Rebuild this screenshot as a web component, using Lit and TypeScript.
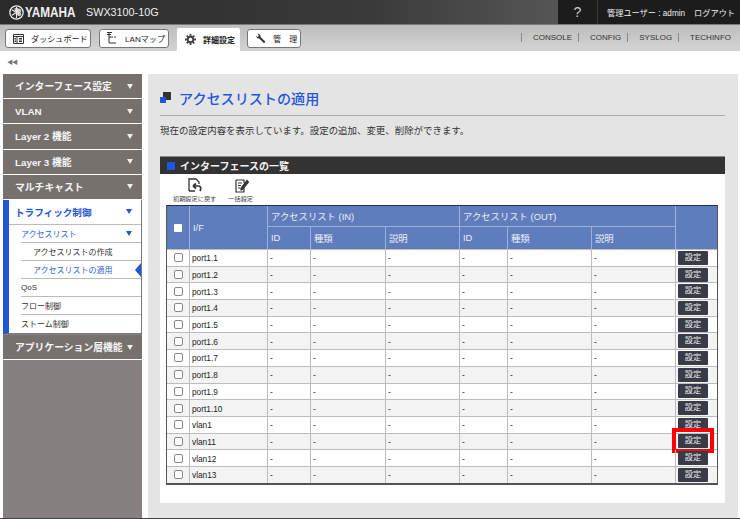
import { css, html, LitElement, svg } from "lit";
import { customElement } from "lit/decorators.js";

const ports = [
    "port1.1", "port1.2", "port1.3", "port1.4", "port1.5", "port1.6", "port1.7",
    "port1.8", "port1.9", "port1.10", "vlan1", "vlan11", "vlan12", "vlan13",
];

const emblem = svg`
    <circle cx="9" cy="9" r="8" fill="none" stroke="#eee" stroke-width="1.5"></circle>
    <g stroke="#eee" stroke-width="1.3" fill="none">
        <path d="M9 2.5V15.5M7.4 3.5V6.5Q9 8 10.6 6.5V3.5"></path>
        <path d="M9 2.5V15.5M7.4 3.5V6.5Q9 8 10.6 6.5V3.5" transform="rotate(60 9 9)"></path>
        <path d="M9 2.5V15.5M7.4 3.5V6.5Q9 8 10.6 6.5V3.5" transform="rotate(120 9 9)"></path>
    </g>`;

@customElement("app-root")
export class AppRoot extends LitElement {
    static styles = css`
        :host {
            display: block;
            width: 740px;
            height: 519px;
            overflow: hidden;
            background: #fff;
            color: #222;
            font-family: "Liberation Sans", "Noto Sans CJK JP", sans-serif;
            font-size: 9px;
        }
        .page {
            display: flex;
            flex-direction: column;
            height: 519px;
            box-sizing: border-box;
            border-bottom: 1px solid #444;
        }

        /* header */
        .top {
            display: flex;
            align-items: center;
            height: 24px;
            background: linear-gradient(90deg, #2a2a2a 0%, #3a3a3a 50%, #555 75%);
            color: #eee;
            flex: none;
        }
        .logo { display: flex; align-items: center; margin-left: 9px; width: 77px; }
        .logo svg { width: 15px; height: 15px; flex: none; }
        .logo b {
            display: inline-block;
            font-size: 15.5px;
            transform: scaleX(0.76);
            transform-origin: left center;
            margin-left: 1px;
        }
        .model { font-size: 10.8px; }
        .top-right {
            margin-left: auto;
            display: flex;
            align-items: center;
            width: 182px;
            height: 24px;
            background: #1c1c1c;
        }
        .help {
            width: 39px;
            height: 24px;
            line-height: 25px;
            text-align: center;
            font-size: 14px;
            color: #ccc;
            border-right: 1px solid #3a3a3a;
        }
        .user { margin-left: 9px; font-size: 8.2px; white-space: nowrap; }
        .logout { margin-left: 9px; font-size: 8.2px; white-space: nowrap; }

        .tabs {
            display: flex;
            align-items: flex-end;
            height: 27px;
            box-sizing: border-box;
            border-top: 1px solid #777;
            background: linear-gradient(#bdbdbd, #d4d4d4);
            padding-left: 5px;
            flex: none;
        }
        .tab {
            display: flex;
            align-items: center;
            height: 19px;
            margin-bottom: 3px;
            box-sizing: border-box;
            background: #fff;
            border: 1px solid #777;
            border-radius: 3px;
            font-size: 8.1px;
            white-space: nowrap;
        }
        .tab svg { flex: none; }
        .t1 { width: 86px; margin-right: 8px; padding-left: 7px; gap: 7px; }
        .t2 { width: 70px; margin-right: 8px; padding-left: 6px; gap: 8px; }
        .t3 {
            width: 63px;
            height: 23px;
            margin: 0 7px 0 0;
            padding-left: 8px;
            gap: 7px;
            border: none;
            border-radius: 2px 2px 0 0;
            font-weight: bold;
            font-size: 8px;
        }
        .t4 { width: 54px; padding-left: 7px; gap: 7px; }
        .links {
            margin-left: auto;
            margin-bottom: 9px;
            display: flex;
            font-size: 8px;
            color: #333;
        }
        .links span {
            border-left: 1px solid #888;
            padding: 0 6px 0 11px;
            line-height: 9px;
        }
        .links span:last-child { padding-right: 9px; }

        .strip {
            height: 23px;
            flex: none;
            box-sizing: border-box;
            padding: 7px 0 0 7px;
            color: #777;
            font-size: 6px;
            line-height: 8px;
            letter-spacing: -1px;
        }

        .main { display: flex; flex: 1; min-height: 0; padding-left: 3px; padding-right: 2px; gap: 6px; }

        /* side menu */
        .side {
            width: 139px;
            flex: none;
            background: #86817f;
            color: #f4f4f4;
            font-weight: bold;
            font-size: 9.8px;
        }
        .item {
            display: flex;
            justify-content: space-between;
            align-items: center;
            box-sizing: border-box;
            height: 25.2px;
            padding: 0 9px 0 12px;
            background: #77716d;
            border-bottom: 1px solid #fff;
        }
        .tri {
            width: 0;
            height: 0;
            border-left: 3px solid transparent;
            border-right: 3px solid transparent;
            border-top: 5px solid #eee;
        }
        .open {
            background: #fff;
            border-left: 6px solid #1f57d6;
            border-right: 1px solid #777;
            border-bottom: 1px solid #777;
            box-sizing: border-box;
            height: 134px;
            margin-bottom: 1px;
            color: #333;
            font-weight: normal;
            font-size: 8px;
        }
        .open .tri { border-top-color: #1f57d6; }
        .open-head {
            display: flex;
            justify-content: space-between;
            align-items: center;
            height: 25px;
            box-sizing: border-box;
            padding: 0 9px 0 6px;
            color: #1f57d6;
            font-size: 9.6px;
            font-weight: bold;
            border-bottom: 1px solid #bbb;
        }
        .sub {
            position: relative;
            display: flex;
            justify-content: space-between;
            align-items: center;
            height: 18px;
            box-sizing: border-box;
            margin-left: 12px;
            padding: 0 9px 0 0;
            border-bottom: 1px solid #bbb;
        }
        .sub:last-child { border-bottom: none; }
        .in { padding-left: 12px; }
        .blue { color: #2a5fd6; }
        .marker {
            position: absolute;
            right: 0;
            top: 2px;
            width: 0;
            height: 0;
            border-top: 7px solid transparent;
            border-bottom: 7px solid transparent;
            border-right: 6px solid #1f57d6;
        }

        /* content */
        .content {
            flex: 1;
            min-width: 0;
            background: #e4e4e4;
            padding: 0 13px 15px 12px;
            display: flex;
            flex-direction: column;
        }
        .title {
            display: flex;
            align-items: center;
            gap: 8px;
            height: 42px;
            padding-top: 6px;
            box-sizing: border-box;
            border-bottom: 1px solid #aaa;
            color: #1f57d6;
            font-size: 14.1px;
            font-weight: 500;
            flex: none;
        }
        .title-icon { position: relative; width: 11px; height: 11px; flex: none; }
        .title-icon i { position: absolute; right: 0; top: 0; width: 8px; height: 8px; background: #333; }
        .title-icon u { position: absolute; left: 0; bottom: 0; width: 6px; height: 6px; background: #1f57d6; }
        .desc {
            height: 40px;
            padding-top: 8px;
            box-sizing: border-box;
            font-size: 9.45px;
            line-height: 13px;
            color: #333;
            flex: none;
        }
        .card { flex: 1; background: #fff; display: flex; flex-direction: column; }
        .card-head {
            display: flex;
            align-items: center;
            gap: 5px;
            height: 18px;
            box-sizing: border-box;
            padding-left: 7px;
            background: #333;
            border-top: 1px solid #888;
            color: #f2f2f2;
            font-weight: bold;
            font-size: 10px;
            flex: none;
        }
        .card-head i { width: 8px; height: 8px; background: #1f57d6; }
        .tools { display: flex; height: 31px; padding-left: 13px; flex: none; }
        .tool {
            display: flex;
            flex-direction: column;
            align-items: center;
            padding-top: 3px;
            font-size: 6.2px;
            line-height: 8px;
            color: #444;
            white-space: nowrap;
        }
        .tool svg { width: 16px; height: 16px; margin-bottom: 2px; }
        .tool + .tool { margin-left: 12px; }

        .table {
            margin-left: 6px;
            width: 552px;
            box-sizing: border-box;
            border-left: 1px solid #555;
            border-right: 1px solid #555;
            border-bottom: 2px solid #555;
            border-top: 1px solid #1d2f5c;
        }
        .head, .row {
            display: grid;
            grid-template-columns: 22px 78px 43px 75px 74px 48px 84px 84px 42px;
        }
        .head {
            grid-template-rows: 21px 22px;
            background: #5f7dbc;
            color: #e9eef8;
            font-size: 9.35px;
        }
        .head > div {
            display: flex;
            align-items: center;
            padding-left: 3px;
            border-left: 1px solid #9db0d8;
            box-sizing: border-box;
        }
        .head > .corner { grid-row: 1 / 3; border-left: none; padding-left: 0; justify-content: center; }
        .corner i { width: 8px; height: 8px; background: #fff; border-radius: 1px; }
        .head > .ifname { grid-row: 1 / 3; }
        .head > .group { grid-column: span 3; border-bottom: 1px solid #9db0d8; }
        .head > .action { grid-column: 9; grid-row: 1 / 3; }
        .head > .in-col { grid-row: 2; }
        .row {
            height: 16.7px;
            box-sizing: border-box;
            border-top: 1px solid #bdbdbd;
            font-size: 8.3px;
            color: #222;
        }
        .row:nth-child(even) { background: #f3f3f3; }
        .row > div {
            display: flex;
            align-items: center;
            padding: 1px 0 0 2px;
            border-left: 1px solid #bdbdbd;
            box-sizing: border-box;
            min-width: 0;
        }
        .row > .check { border-left: none; padding: 0; justify-content: center; }
        .check i {
            width: 7px;
            height: 7px;
            background: #fff;
            border: 1px solid #888;
            border-radius: 2px;
        }
        .row > .btn-cell { position: relative; padding: 0 0 0 2px; }
        .btn {
            width: 30px;
            height: 14px;
            line-height: 14px;
            text-align: center;
            background: #393c48;
            color: #eee;
            border-radius: 1px;
            font-size: 8.2px;
        }
        .hilite {
            position: absolute;
            left: -4px;
            top: -6px;
            width: 42px;
            height: 25px;
            box-sizing: border-box;
            border: 4px solid #f00;
        }
    `;

    private renderRow(name: string) {
        return html`
            <div class="row">
                <div class="check"><i></i></div>
                <div>${name}</div>
                <div>-</div><div>-</div><div>-</div>
                <div>-</div><div>-</div><div>-</div>
                <div class="btn-cell">
                    <div class="btn">設定</div>
                    ${name === "vlan11" ? html`<div class="hilite"></div>` : ""}
                </div>
            </div>
        `;
    }

    render() {
        return html`
            <div class="page">
                <div class="top">
                    <div class="logo">
                        <svg viewBox="0 0 18 18">${emblem}</svg>
                        <b>YAMAHA</b>
                    </div>
                    <div class="model">SWX3100-10G</div>
                    <div class="top-right">
                        <div class="help">?</div>
                        <div class="user">管理ユーザー : admin</div>
                        <div class="logout">ログアウト</div>
                    </div>
                </div>

                <div class="tabs">
                    <div class="tab t1">
                        <svg width="11" height="10" viewBox="0 0 11 10" fill="none" stroke="#333">
                            <path d="M.5.5H10.5V9.5H.5ZM.5 2.5H10.5M4 2.5V9.5M6 4.5H9M6 6H9M6 7.5H9M1.5 4.5H3M1.5 6H3M1.5 7.5H3"></path>
                        </svg>
                        ダッシュボード
                    </div>
                    <div class="tab t2">
                        <svg width="11" height="13" viewBox="0 0 11 13" fill="none" stroke="#333">
                            <path d="M1 .5H6M3 .5V11M3 5H7M3 11H10M1 2.5H5M8 5H10"></path>
                        </svg>
                        LANマップ
                    </div>
                    <div class="tab t3">
                        <svg width="11" height="11" viewBox="0 0 12 12">
                            <circle cx="6" cy="6" r="3" fill="none" stroke="#444" stroke-width="2"></circle>
                            <path d="M6 0V2.5M6 9.5V12M0 6H2.5M9.5 6H12M1.8 1.8L3.5 3.5M8.5 8.5L10.2 10.2M1.8 10.2L3.5 8.5M8.5 3.5L10.2 1.8" stroke="#444" stroke-width="2"></path>
                        </svg>
                        詳細設定
                    </div>
                    <div class="tab t4">
                        <svg width="11" height="11" viewBox="0 0 11 11">
                            <path d="M.8 2.4L2.6 4.1 4 2.8 2.4 1 3.6.8 5.4 2.2 5.6 4 10.4 8.8 9 10.2 4.2 5.4 2.2 5.2Z" fill="#333"></path>
                        </svg>
                        管　理
                    </div>
                    <div class="links">
                        <span>CONSOLE</span><span>CONFIG</span><span>SYSLOG</span><span>TECHINFO</span>
                    </div>
                </div>

                <div class="strip">◀◀</div>

                <div class="main">
                    <div class="side">
                        <div class="item">インターフェース設定<span class="tri"></span></div>
                        <div class="item">VLAN<span class="tri"></span></div>
                        <div class="item">Layer 2 機能<span class="tri"></span></div>
                        <div class="item">Layer 3 機能<span class="tri"></span></div>
                        <div class="item">マルチキャスト<span class="tri"></span></div>
                        <div class="open">
                            <div class="open-head">トラフィック制御<span class="tri"></span></div>
                            <div class="sub blue">アクセスリスト<span class="tri"></span></div>
                            <div class="sub in">アクセスリストの作成</div>
                            <div class="sub in blue">アクセスリストの適用<span class="marker"></span></div>
                            <div class="sub">QoS</div>
                            <div class="sub">フロー制御</div>
                            <div class="sub">ストーム制御</div>
                        </div>
                        <div class="item">アプリケーション層機能<span class="tri"></span></div>
                    </div>

                    <div class="content">
                        <div class="title">
                            <span class="title-icon"><i></i><u></u></span>
                            アクセスリストの適用
                        </div>
                        <div class="desc">現在の設定内容を表示しています。設定の追加、変更、削除ができます。</div>
                        <div class="card">
                            <div class="card-head"><i></i>インターフェースの一覧</div>
                            <div class="tools">
                                <div class="tool">
                                    <svg viewBox="0 0 16 16" fill="none" stroke="#333" stroke-width="1.3">
                                        <path d="M2 14V2H9L12 5V7M2 14H8"></path>
                                        <path d="M6 9H12Q15 10 13 14M6 9L9 6.5M6 9L9 11.5" stroke-width="1.7"></path>
                                    </svg>
                                    初期設定に戻す
                                </div>
                                <div class="tool">
                                    <svg viewBox="0 0 16 16" fill="none" stroke="#333" stroke-width="1.2">
                                        <path d="M3 3H11V6M3 3V15H11V11M5 6H9M5 8.5H8M5 11H7"></path>
                                        <path d="M8 11L14 3.5 15.5 5 9.5 12.5 8 13Z" fill="#333"></path>
                                    </svg>
                                    一括設定
                                </div>
                            </div>
                            <div class="table">
                                <div class="head">
                                    <div class="corner"><i></i></div>
                                    <div class="ifname">I/F</div>
                                    <div class="group">アクセスリスト (IN)</div>
                                    <div class="group">アクセスリスト (OUT)</div>
                                    <div class="action"></div>
                                    <div class="in-col">ID</div><div class="in-col">種類</div><div class="in-col">説明</div>
                                    <div class="in-col">ID</div><div class="in-col">種類</div><div class="in-col">説明</div>
                                </div>
                                <div>${ports.map((p) => this.renderRow(p))}</div>
                            </div>
                        </div>
                    </div>
                </div>
            </div>
        `;
    }
}

declare global {
    interface HTMLElementTagNameMap {
        "app-root": AppRoot;
    }
}
